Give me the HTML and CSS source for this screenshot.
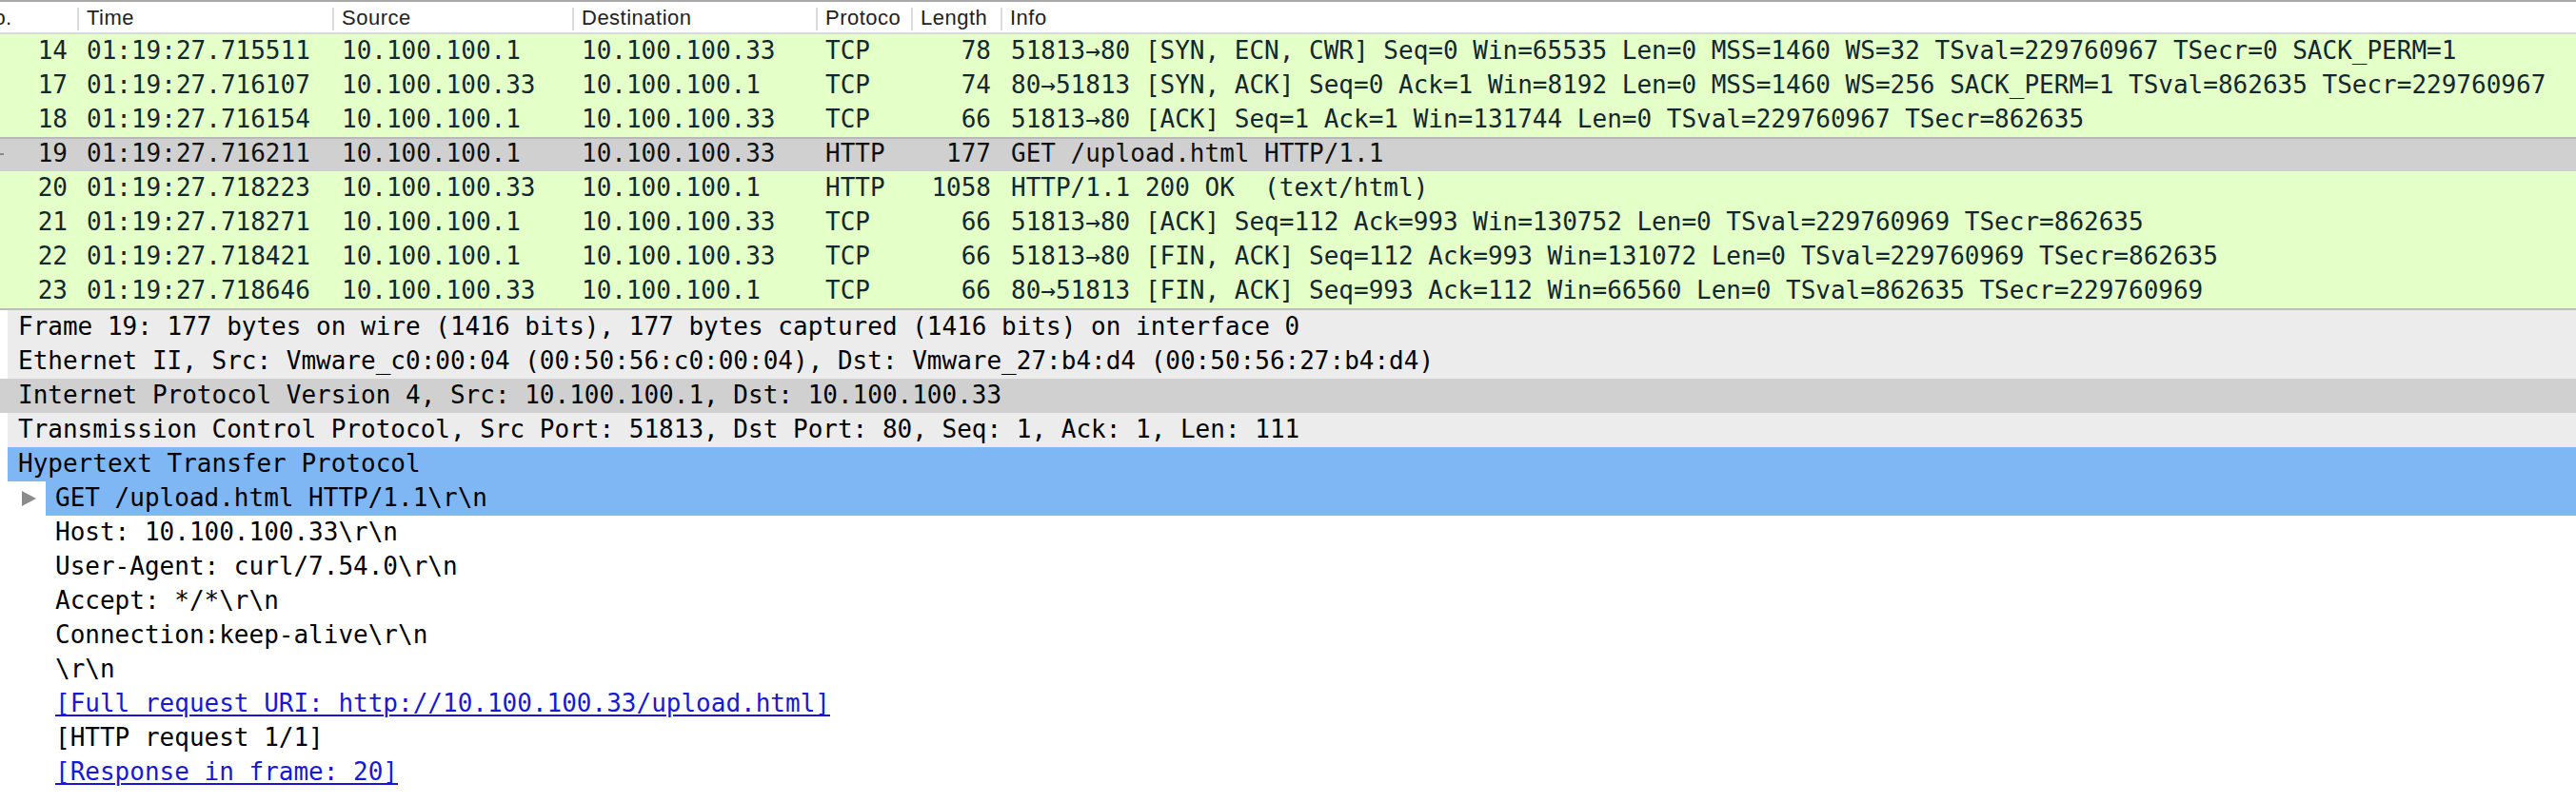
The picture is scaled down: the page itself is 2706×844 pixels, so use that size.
FILE: index.html
```html
<!DOCTYPE html>
<html>
<head>
<meta charset="utf-8">
<link rel="stylesheet" href="styles.css">
</head>
<body>
<div class="plist">
  <div class="phead">
    <div class="hcell hno">No.</div>
    <div class="hcell sep">Time</div>
    <div class="hcell sep">Source</div>
    <div class="hcell sep">Destination</div>
    <div class="hcell sep">Protoco</div>
    <div class="hcell sep">Length</div>
    <div class="hcell sep">Info</div>
  </div>
  <div class="prow green"><span class="c num">14</span><span class="c">01:19:27.715511</span><span class="c">10.100.100.1</span><span class="c">10.100.100.33</span><span class="c">TCP</span><span class="c num">78</span><span class="c info">51813→80 [SYN, ECN, CWR] Seq=0 Win=65535 Len=0 MSS=1460 WS=32 TSval=229760967 TSecr=0 SACK_PERM=1</span></div>
  <div class="prow green"><span class="c num">17</span><span class="c">01:19:27.716107</span><span class="c">10.100.100.33</span><span class="c">10.100.100.1</span><span class="c">TCP</span><span class="c num">74</span><span class="c info">80→51813 [SYN, ACK] Seq=0 Ack=1 Win=8192 Len=0 MSS=1460 WS=256 SACK_PERM=1 TSval=862635 TSecr=229760967</span></div>
  <div class="prow green"><span class="c num">18</span><span class="c">01:19:27.716154</span><span class="c">10.100.100.1</span><span class="c">10.100.100.33</span><span class="c">TCP</span><span class="c num">66</span><span class="c info">51813→80 [ACK] Seq=1 Ack=1 Win=131744 Len=0 TSval=229760967 TSecr=862635</span></div>
  <div class="prow selected"><span class="c num"><span class="mark"></span>19</span><span class="c">01:19:27.716211</span><span class="c">10.100.100.1</span><span class="c">10.100.100.33</span><span class="c">HTTP</span><span class="c num">177</span><span class="c info">GET /upload.html HTTP/1.1</span></div>
  <div class="prow green"><span class="c num">20</span><span class="c">01:19:27.718223</span><span class="c">10.100.100.33</span><span class="c">10.100.100.1</span><span class="c">HTTP</span><span class="c num">1058</span><span class="c info">HTTP/1.1 200 OK  (text/html)</span></div>
  <div class="prow green"><span class="c num">21</span><span class="c">01:19:27.718271</span><span class="c">10.100.100.1</span><span class="c">10.100.100.33</span><span class="c">TCP</span><span class="c num">66</span><span class="c info">51813→80 [ACK] Seq=112 Ack=993 Win=130752 Len=0 TSval=229760969 TSecr=862635</span></div>
  <div class="prow green"><span class="c num">22</span><span class="c">01:19:27.718421</span><span class="c">10.100.100.1</span><span class="c">10.100.100.33</span><span class="c">TCP</span><span class="c num">66</span><span class="c info">51813→80 [FIN, ACK] Seq=112 Ack=993 Win=131072 Len=0 TSval=229760969 TSecr=862635</span></div>
  <div class="prow green"><span class="c num">23</span><span class="c">01:19:27.718646</span><span class="c">10.100.100.33</span><span class="c">10.100.100.1</span><span class="c">TCP</span><span class="c num">66</span><span class="c info">80→51813 [FIN, ACK] Seq=993 Ack=112 Win=66560 Len=0 TSval=862635 TSecr=229760969</span></div>
</div>
<div class="splitter"></div>
<div class="details">
  <div class="node top light">Frame 19: 177 bytes on wire (1416 bits), 177 bytes captured (1416 bits) on interface 0</div>
  <div class="node top light">Ethernet II, Src: Vmware_c0:00:04 (00:50:56:c0:00:04), Dst: Vmware_27:b4:d4 (00:50:56:27:b4:d4)</div>
  <div class="node top dark">Internet Protocol Version 4, Src: 10.100.100.1, Dst: 10.100.100.33</div>
  <div class="node top light">Transmission Control Protocol, Src Port: 51813, Dst Port: 80, Seq: 1, Ack: 1, Len: 111</div>
  <div class="node top blue">Hypertext Transfer Protocol</div>
  <div class="node child"><span class="twisty"><svg width="15" height="16" viewBox="0 0 15 16"><polygon points="0,0 15,8 0,16" fill="#8b8b8b"/></svg></span><span class="label blue">GET /upload.html HTTP/1.1\r\n</span></div>
  <div class="node child"><span class="twisty"></span><span class="label">Host: 10.100.100.33\r\n</span></div>
  <div class="node child"><span class="twisty"></span><span class="label">User-Agent: curl/7.54.0\r\n</span></div>
  <div class="node child"><span class="twisty"></span><span class="label">Accept: */*\r\n</span></div>
  <div class="node child"><span class="twisty"></span><span class="label">Connection:keep-alive\r\n</span></div>
  <div class="node child"><span class="twisty"></span><span class="label">\r\n</span></div>
  <div class="node child"><span class="twisty"></span><span class="label"><a class="link">[Full request URI: http://10.100.100.33/upload.html]</a></span></div>
  <div class="node child"><span class="twisty"></span><span class="label">[HTTP request 1/1]</span></div>
  <div class="node child"><span class="twisty"></span><span class="label"><a class="link">[Response in frame: 20]</a></span></div>
</div>
</body>
</html>
```
FILE: styles.css
```css
html, body {
  margin: 0;
  padding: 0;
  background: #ffffff;
  overflow: hidden;
}

body {
  width: 2706px;
  height: 844px;
  font-family: "DejaVu Sans Mono", "Liberation Mono", monospace;
  font-size: 26px;
  color: #000000;
}

.plist {
  display: flex;
  flex-direction: column;
}

.phead,
.prow {
  display: grid;
  grid-template-columns: 81px 268px 252px 256px 100px 94px 1fr;
}

.phead {
  height: 32px;
  border-top: 2px solid #a9a9a9;
  border-bottom: 2px solid #d9d9d9;
  background: #ffffff;
}

.hcell {
  font-family: "Helvetica Neue", "Liberation Sans", Arial, sans-serif;
  font-size: 22px;
  letter-spacing: 0.5px;
  color: #222222;
  line-height: 32px;
  padding-top: 1px;
  padding-left: 10px;
  overflow: hidden;
  white-space: nowrap;
}

.hno {
  padding-left: 0;
  text-indent: -23px;
}

.sep {
  background-image: linear-gradient(#dcdcdc, #dcdcdc);
  background-repeat: no-repeat;
  background-size: 2px 24px;
  background-position: 0 6px;
}

.prow {
  height: 36px;
  color: #12272e;
}

.prow.green {
  background: #e4ffc7;
}

.prow.selected {
  background: #d0d0d0;
  box-shadow: inset 0 2px 0 #b8b8b8;
  color: #101010;
}

.c {
  display: block;
  line-height: 34px;
  padding: 0 0 2px 10px;
  white-space: pre;
  overflow: hidden;
}

.c.num {
  text-align: right;
  padding-left: 0;
  padding-right: 10px;
  position: relative;
}

.c.info {
  padding-left: 11px;
}

.mark {
  position: absolute;
  left: 0;
  top: 17px;
  width: 4px;
  height: 2px;
  background: #8a8a8a;
}

.splitter {
  height: 2px;
  background: #bcbcbc;
}

.details {
  display: flex;
  flex-direction: column;
}

.node {
  height: 36px;
  line-height: 34px;
  padding-bottom: 2px;
  box-sizing: border-box;
  white-space: pre;
  color: #000000;
}

.node.top {
  margin-left: 8px;
  padding-left: 11px;
}

.node.top.dark {
  margin-left: 0;
  padding-left: 19px;
  background: #d0d0d0;
}

.node.top.light {
  background: #ececec;
}

.blue {
  background: #7fb7f5;
}

.node.child {
  display: flex;
  padding-bottom: 0;
}

.twisty {
  width: 48px;
  flex: none;
  display: flex;
  align-items: center;
  padding-left: 23px;
  box-sizing: border-box;
}

.twisty svg {
  display: block;
}

.label {
  flex: 1;
  padding-left: 10px;
  padding-bottom: 2px;
  line-height: 34px;
}

.link {
  color: #1818d4;
  text-decoration: underline;
  text-decoration-thickness: 2px;
  text-underline-offset: 3px;
}
```
